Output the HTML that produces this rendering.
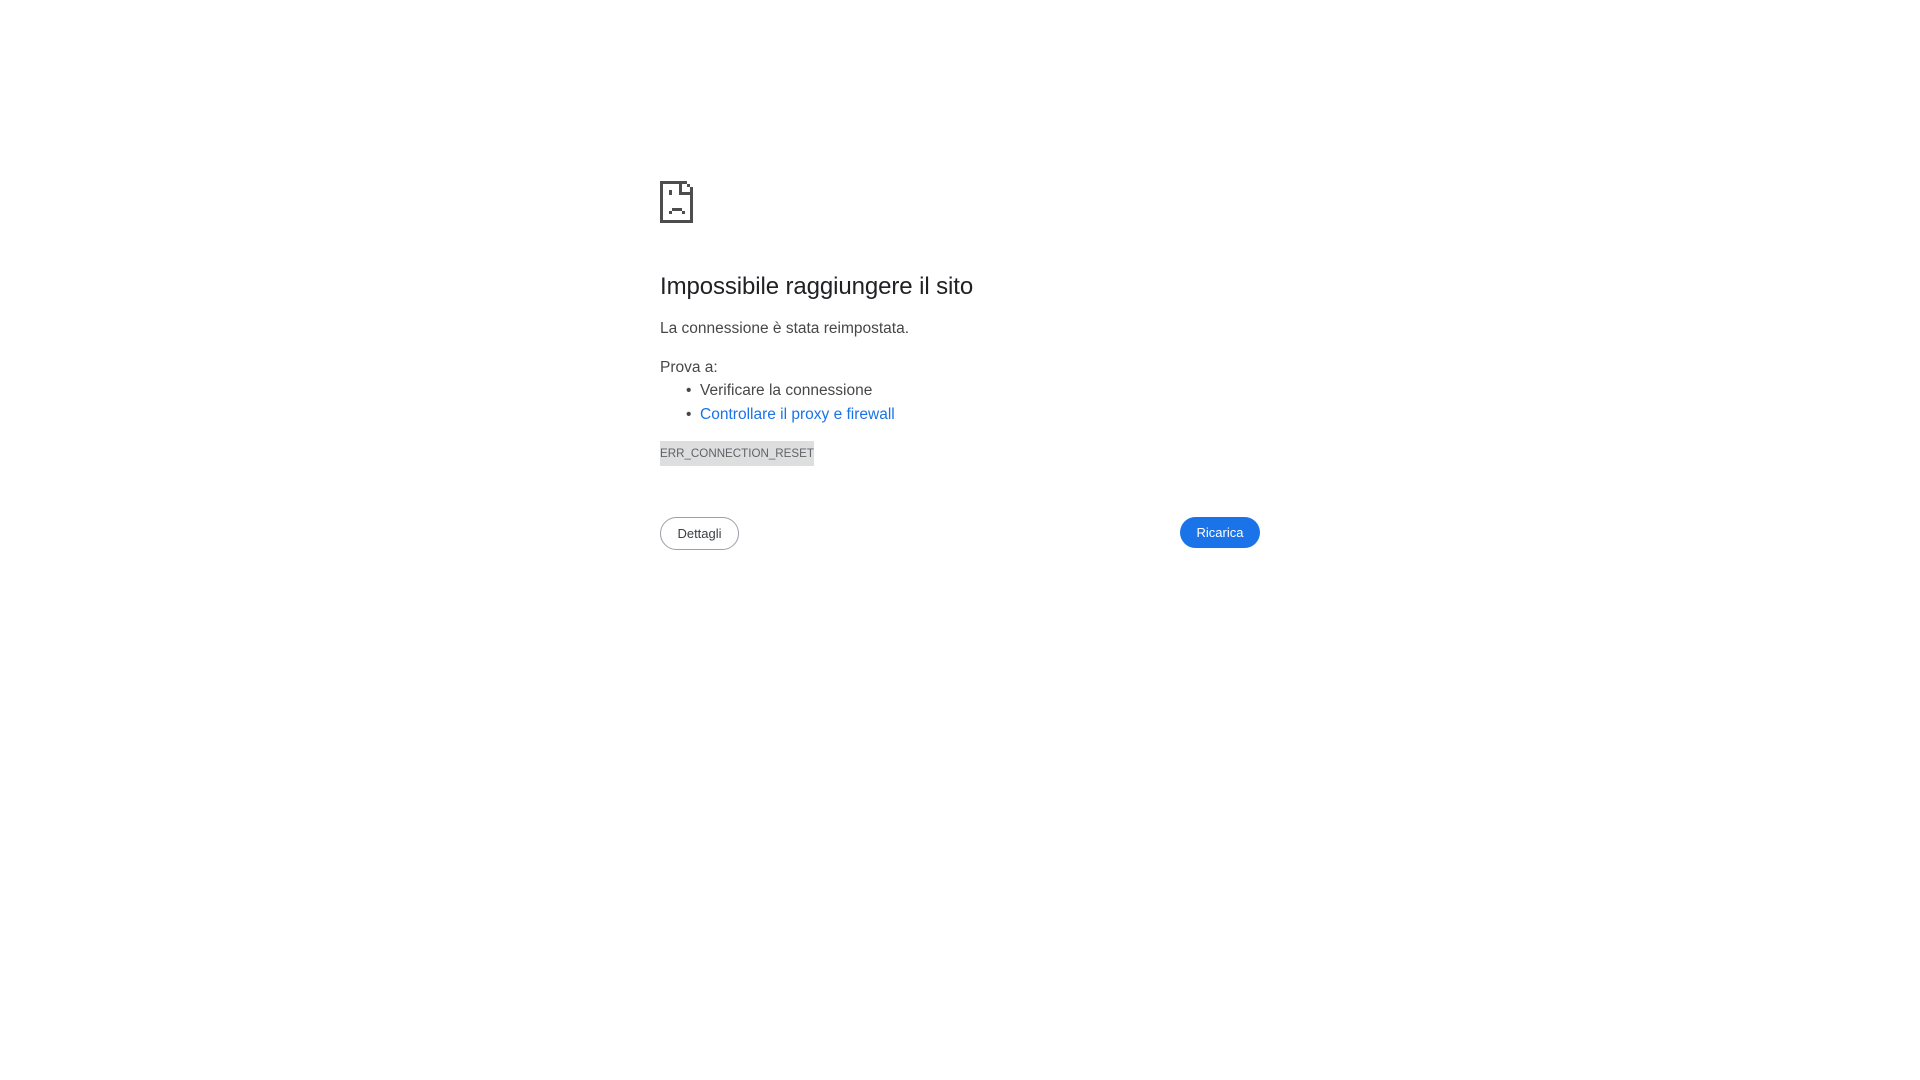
<!DOCTYPE html>
<html><head><meta charset="utf-8"><style>
html,body{margin:0;background:#fff;width:1920px;height:1080px;overflow:hidden;font-family:"Liberation Sans",sans-serif}
.a{position:absolute;white-space:nowrap}
</style></head><body>
<svg class="a" style="left:660px;top:181px" width="34" height="42" viewBox="0 0 34 42" shape-rendering="crispEdges">
<path fill="#4d4d4d" d="M0 0H27V3H3V39H30V14H33V42H0Z M19 0H22V11H33V14H19Z M27 3H30V6H27Z M30 6H33V11H30Z M9 9H12V14H9Z M12 27H22V30H12Z M9 30H12V33H9Z M22 30H25V33H22Z"/>
</svg>
<div class="a" style="left:660px;top:273px;font-size:24px;color:#202124;letter-spacing:-0.1px">Impossibile raggiungere il sito</div>
<div class="a" style="left:660px;top:320px;font-size:15.5px;color:#474747">La connessione è stata reimpostata.</div>
<div class="a" style="left:660px;top:359px;font-size:15.5px;color:#474747">Prova a:</div>
<div class="a" style="left:686px;top:382px;font-size:15.5px;color:#474747">•&nbsp;&nbsp;Verificare la connessione</div>
<div class="a" style="left:686px;top:406px;font-size:15.5px;color:#474747">•&nbsp;&nbsp;<span style="color:#1a73e8">Controllare il proxy e firewall</span></div>
<div class="a" style="left:660px;top:441px;width:154px;height:25px;background:#dedede;font-size:11.6px;color:#5f6368;line-height:26px;overflow:hidden">ERR_CONNECTION_RESET</div>
<div class="a" style="left:660px;top:517px;width:77px;height:31px;border:1px solid #9aa0a6;border-radius:17px;font-size:13px;color:#3c4043;text-align:center;line-height:31px">Dettagli</div>
<div class="a" style="left:1180px;top:517px;width:80px;height:31px;background:#1a73e8;border-radius:16px;font-size:13px;color:#fff;text-align:center;line-height:31px">Ricarica</div>
</body></html>
